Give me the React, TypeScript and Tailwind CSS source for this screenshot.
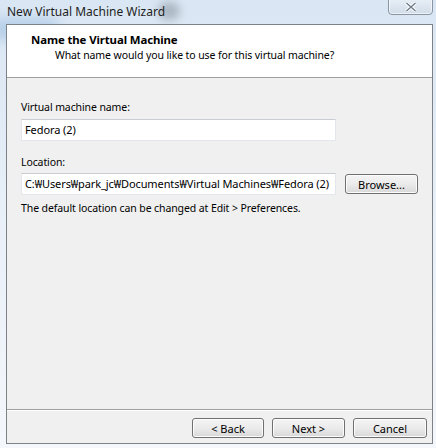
import React from "react";

// ── 상수 ──────────────────────────────────────────────────────────
const FONT = "font-['Noto_Sans','Liberation_Sans',sans-serif]";
const LOCATION = "C:₩Users₩park_jc₩Documents₩Virtual Machines₩Fedora (2)";

export default function App() {
  return (
    <div
      className={`relative h-[448px] w-[436px] overflow-hidden bg-gradient-to-b from-[#d9e6f3] via-[#e9f0f8] to-[#f4f7fb] text-[#000] ${FONT}`}
    >
      {/* 유리 프레임 얼룩 */}
      <div className="absolute left-[-10px] top-[18px] h-[22px] w-[70px] rounded-full bg-[#a9c6e6] opacity-70 blur-[6px]" />
      <div className="absolute left-[158px] top-[2px] h-[18px] w-[22px] rounded-full bg-[#8d98a3] opacity-60 blur-[4px]" />

      {/* 타이틀 바 */}
      <div className="relative flex h-[24px] items-center pl-[7px]">
        <span className="text-[12px] leading-none text-[#1e1e1e]">New Virtual Machine Wizard</span>
      </div>

      {/* 닫기 버튼 */}
      <div className="absolute left-[388px] top-[-2px] flex h-[17px] w-[45px] items-center justify-center rounded-b-[4px] border border-[#8a96a3] bg-gradient-to-b from-[#e7eef6] to-[#d2dde9] shadow-[inset_0_0_0_1px_rgba(255,255,255,0.6)]">
        <svg width="12" height="10" viewBox="0 0 12 10" className="mt-[1px]">
          <path d="M1.5 1 L10.5 9 M10.5 1 L1.5 9" stroke="#ffffff" strokeWidth="3.2" />
          <path d="M1.5 1 L10.5 9 M10.5 1 L1.5 9" stroke="#6f7c8a" strokeWidth="1.4" />
        </svg>
      </div>

      {/* 대화상자 본문 */}
      <div className="relative ml-[6px] flex h-[420px] w-[427px] flex-col border border-[#7c8288] bg-[#f0f0f0]">
        {/* 헤더 */}
        <div className="h-[53px] shrink-0 border-b border-[#a0a0a0] bg-white pl-[24px] pt-[7px]">
          <p className="text-[11.4px] font-bold leading-[15px] tracking-[-0.1px]">Name the Virtual Machine</p>
          <p className="mt-[1px] pl-[24px] text-[10.5px] leading-[15px] tracking-[-0.1px]">
            What name would you like to use for this virtual machine?
          </p>
        </div>

        {/* 입력 영역 */}
        <div className="flex-1 pl-[14px] pt-[22px]">
          <Label>Virtual machine name:</Label>
          <Field className="mt-[4px] w-[315px]">Fedora (2)</Field>

          <Label className="mt-[14px]">Location:</Label>
          <div className="mt-[3px] flex items-center gap-[9px]">
            <Field className="w-[315px]">{LOCATION}</Field>
            <Button className="w-[73px]">Browse...</Button>
          </div>

          <Label className="mt-[6px]">The default location can be changed at Edit &gt; Preferences.</Label>
        </div>

        {/* 하단 버튼 */}
        <div className="flex h-[34px] shrink-0 items-start justify-end gap-[8px] border-t border-[#a0a0a0] pr-[5px] pt-[8px] shadow-[inset_0_1px_0_#ffffff]">
          <Button className="w-[72px]">&lt; Back</Button>
          <Button className="w-[73px]">Next &gt;</Button>
          <Button className="w-[74px]">Cancel</Button>
        </div>
      </div>
    </div>
  );
}

// ── 공통 UI 조각 ─────────────────────────────────────────────────
function Label({ children, className }: { children: React.ReactNode; className?: string }) {
  return <p className={`text-[10.5px] leading-[15px] tracking-[-0.1px] ${className ?? ""}`}>{children}</p>;
}

function Field({ children, className }: { children: React.ReactNode; className?: string }) {
  return (
    <div
      className={`flex h-[22px] items-center overflow-hidden whitespace-nowrap border border-[#e3e6ea] border-t-[#c9cdd2] bg-white pl-[3px] text-[11px] tracking-[-0.1px] ${className ?? ""}`}
    >
      {children}
    </div>
  );
}

function Button({ children, className }: { children: React.ReactNode; className?: string }) {
  return (
    <button
      type="button"
      className={`flex h-[20px] items-center justify-center rounded-[3px] border border-[#707070] bg-gradient-to-b from-[#f4f4f4] via-[#ebebeb] to-[#d8d8d8] text-[11px] leading-none shadow-[inset_0_0_0_1px_#fcfcfc] ${className ?? ""}`}
    >
      {children}
    </button>
  );
}
